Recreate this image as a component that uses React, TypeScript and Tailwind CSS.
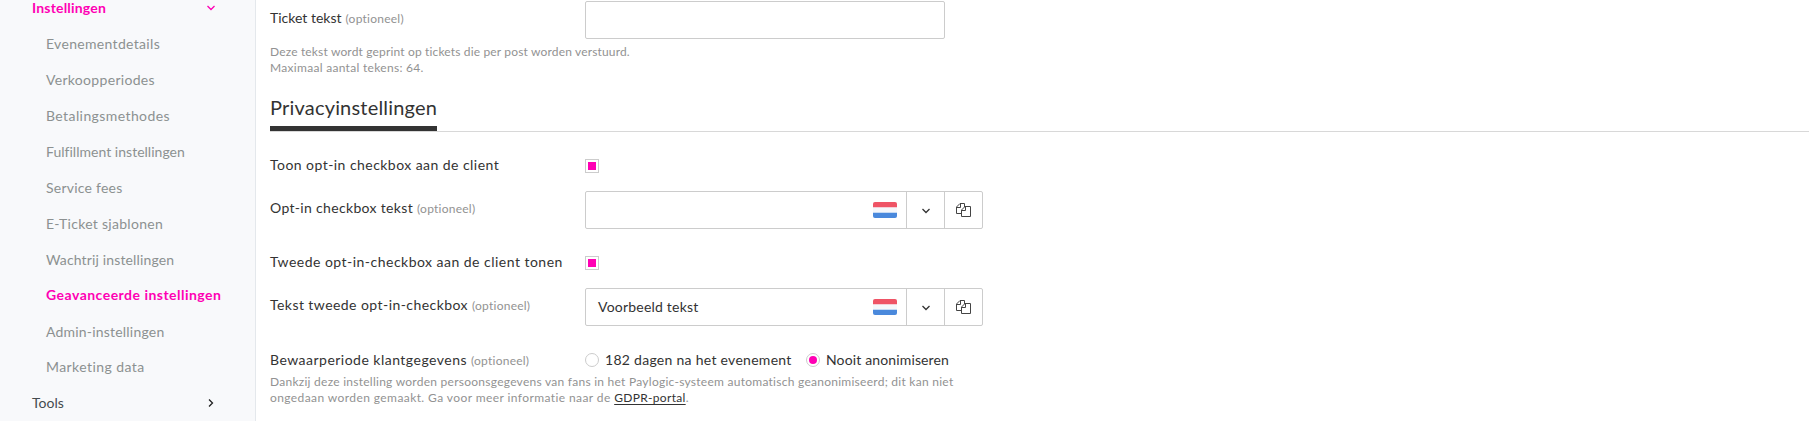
import { ReactNode } from "react";
import clsx from "clsx";

interface MenuItem {
  label: string;
  style: string;
  active?: boolean;
}

const menuItems: MenuItem[] = [
  { label: "Evenementdetails", style: "tracking-[0.32px]" },
  { label: "Verkoopperiodes", style: "tracking-[0.31px]" },
  { label: "Betalingsmethodes", style: "tracking-[0.41px]" },
  { label: "Fulfillment instellingen", style: "tracking-[0.02px]" },
  { label: "Service fees", style: "tracking-[0.23px]" },
  { label: "E-Ticket sjablonen", style: "tracking-[0.29px]" },
  { label: "Wachtrij instellingen", style: "tracking-[0.14px]" },
  { label: "Geavanceerde instellingen", style: "pb-[2px] tracking-[0.48px]", active: true },
  { label: "Admin-instellingen", style: "tracking-[0.2px]" },
  { label: "Marketing data", style: "pb-[2px] tracking-[0.42px]" },
];

const ChevronDown = ({ className }: { className?: string }) => (
  <svg
    viewBox="0 0 10 6"
    className={clsx("w-[10px] h-[6px]", className)}
    fill="none"
    stroke="currentColor"
    strokeWidth="1.3"
  >
    <path d="M1.5 1 L5 4.5 L8.5 1" />
  </svg>
);

const CopyIcon = () => (
  <svg viewBox="0 0 15 14" className="w-[15px] h-[14px]" fill="none" stroke="#444444" strokeWidth="1">
    <path d="M5.5 10.5 H0.5 V4 L4 0.5 H8.5 V4" />
    <path d="M0.5 4.5 H4.5 V0.5" />
    <path d="M9 3.5 H14.5 V13.5 H5.5 V7 Z" />
    <path d="M5.5 7.5 H9.5 V3.5" />
  </svg>
);

const DutchFlag = () => (
  <span className="flex flex-col w-6 h-4 rounded-[2px] overflow-hidden bg-[#f5f7fb]">
    <span className="h-[5px] bg-[#ef5466]" />
    <span className="h-px bg-[#f6cfd7]" />
    <span className="h-1" />
    <span className="h-px bg-[#c6daf3]" />
    <span className="h-[5px] bg-[#4a89dc]" />
  </span>
);

const Optional = () => (
  <span className="ml-1 text-xs leading-4 tracking-[0.24px] text-[#929292]">(optioneel)</span>
);

const Checkbox = () => (
  <span className="block size-[14px] border border-[#cccccc] bg-white p-[2px]">
    <span className="block size-2 bg-[#ff00b4]" />
  </span>
);

const Radio = ({ checked }: { checked?: boolean }) => (
  <span className="block size-[14px] rounded-full border border-[#cccccc] bg-white p-[2px]">
    {checked && <span className="block size-2 rounded-full bg-[#ff00b4]" />}
  </span>
);

const Label = ({ className, children }: { className?: string; children: ReactNode }) => (
  <div className={clsx("w-[315px] shrink-0 whitespace-nowrap leading-5", className)}>{children}</div>
);

const LanguageInput = ({ value }: { value?: string }) => (
  <div className="flex w-[398px] h-[38px] border border-[#cccccc] rounded-[2px]">
    <div className="flex flex-1 items-center justify-between pl-3 pr-[9px]">
      <span className="tracking-[0.21px]">{value}</span>
      <DutchFlag />
    </div>
    <button className="flex w-[38px] items-center justify-center border-l border-[#cccccc]">
      <ChevronDown className="mt-[2px]" />
    </button>
    <button className="flex w-[38px] items-center justify-center border-l border-[#cccccc]">
      <CopyIcon />
    </button>
  </div>
);

const Sidebar = () => (
  <aside className="w-64 shrink-0 border-r border-[#e4e8ec] bg-[#f8f9fb]">
    <div className="flex h-[26px] items-start justify-between pl-8 pr-[39px] text-[#ff00b4]">
      <span className="font-bold leading-[15px] tracking-[0.19px]">Instellingen</span>
      <ChevronDown className="mt-[5px]" />
    </div>
    <ul>
      {menuItems.map((item) => (
        <li
          key={item.label}
          className={clsx(
            "flex h-9 items-center whitespace-nowrap pl-[46px]",
            item.style,
            item.active ? "font-bold text-[#ff00b4]" : "text-[#8c9191]"
          )}
        >
          {item.label}
        </li>
      ))}
    </ul>
    <div className="-mt-px flex h-9 items-center justify-between pl-8 pr-[39px] text-[#454b4f]">
      <span>Tools</span>
      <ChevronDown className="-rotate-90 text-[#222222]" />
    </div>
  </aside>
);

const App = () => {
  return (
    <div className="flex h-[421px] overflow-hidden bg-white font-[Lato,sans-serif] text-sm text-[#333333]">
      <Sidebar />
      <main className="min-w-0 flex-1 pl-[14px] pt-px">
        <div className="flex h-[42px]">
          <Label className="pt-[7px]">
            <span>Ticket tekst</span>
            <Optional />
          </Label>
          <div className="h-[38px] w-[360px] rounded-[2px] border border-[#cccccc]" />
        </div>
        <div className="h-[50px] text-xs leading-4 text-[#929292]">
          <p className="pt-px tracking-[0.16px]">
            Deze tekst wordt geprint op tickets die per post worden verstuurd.
          </p>
          <p className="tracking-[0.3px]">Maximaal aantal tekens: 64.</p>
        </div>

        <div className="flex h-[39px] border-b border-[#d8d8d8]">
          <h2 className="w-[167px] border-b-[5px] border-[#333333] whitespace-nowrap text-xl leading-7 tracking-[0.19px]">
            Privacyinstellingen
          </h2>
        </div>

        <div className="flex h-[59px] pt-[27px]">
          <Label className="-mt-[4px] tracking-[0.45px]">Toon opt-in checkbox aan de client</Label>
          <Checkbox />
        </div>
        <div className="flex h-[38px]">
          <Label className="pt-[7px]">
            <span className="tracking-[0.33px]">Opt-in checkbox tekst</span>
            <Optional />
          </Label>
          <LanguageInput />
        </div>
        <div className="flex h-[59px] pt-[27px]">
          <Label className="-mt-[4px] tracking-[0.48px]">Tweede opt-in-checkbox aan de client tonen</Label>
          <Checkbox />
        </div>
        <div className="flex h-[38px]">
          <Label className="pt-[7px]">
            <span className="tracking-[0.44px]">Tekst tweede opt-in-checkbox</span>
            <Optional />
          </Label>
          <LanguageInput value="Voorbeeld tekst" />
        </div>
        <div className="flex h-12 items-center pt-[20px]">
          <Label className="-mt-px">
            <span className="tracking-[0.48px]">Bewaarperiode klantgegevens</span>
            <Optional />
          </Label>
          <div className="flex items-center whitespace-nowrap">
            <Radio />
            <span className="-mt-px ml-[6px] w-[201px] tracking-[0.28px]">182 dagen na het evenement</span>
            <Radio checked />
            <span className="-mt-px ml-[6px] tracking-[0.14px]">Nooit anonimiseren</span>
          </div>
        </div>
        <div className="whitespace-nowrap text-xs leading-4 text-[#929292]">
          <p className="tracking-[0.26px]">
            Dankzij deze instelling worden persoonsgegevens van fans in het Paylogic-systeem automatisch
            geanonimiseerd; dit kan niet
          </p>
          <p className="tracking-[0.41px]">
            ongedaan worden gemaakt. Ga voor meer informatie naar de{" "}
            <a className="text-[#333333] tracking-[0.31px] underline underline-offset-2">GDPR-portal</a>.
          </p>
        </div>
      </main>
    </div>
  );
};

export default App;
